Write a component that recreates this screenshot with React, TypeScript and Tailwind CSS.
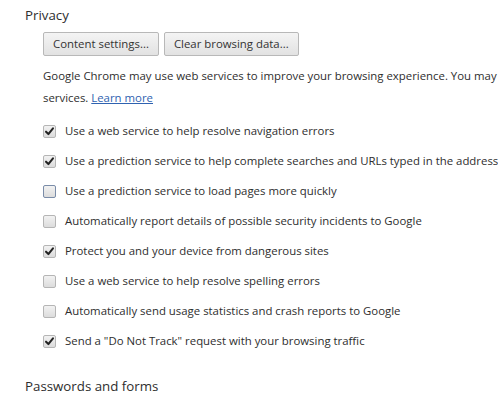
const OPTIONS: { label: string; checked: boolean; focused?: boolean }[] = [
  { label: "Use a web service to help resolve navigation errors", checked: true },
  { label: "Use a prediction service to help complete searches and URLs typed in the address bar", checked: true },
  { label: "Use a prediction service to load pages more quickly", checked: false, focused: true },
  { label: "Automatically report details of possible security incidents to Google", checked: false },
  { label: "Protect you and your device from dangerous sites", checked: true },
  { label: "Use a web service to help resolve spelling errors", checked: false },
  { label: "Automatically send usage statistics and crash reports to Google", checked: false },
  { label: 'Send a "Do Not Track" request with your browsing traffic', checked: true },
];

function Checkbox({ checked, focused }: { checked: boolean; focused?: boolean }) {
  return (
    <span
      className={`relative flex h-[13px] w-[13px] shrink-0 items-center justify-center rounded-[2px] border bg-gradient-to-b from-[#f2f2f2] to-[#dcdcdc] ${
        focused ? "border-[#7a8ca8]" : "border-[#b5b5b5]"
      }`}
    >
      {checked && (
        <svg viewBox="0 0 12 12" className="h-[11px] w-[11px]">
          <path d="M2.2 6.2 L4.8 8.8 L9.8 2.6" fill="none" stroke="#222" strokeWidth={2.2} strokeLinecap="round" strokeLinejoin="round" />
        </svg>
      )}
    </span>
  );
}

export default function App() {
  return (
    <div className="h-[399px] w-[498px] overflow-hidden whitespace-nowrap bg-white font-['Open_Sans',sans-serif] text-[#2e2e2e]">
      <div className="pl-[25px] pt-[4px]">
        <h2 className="text-[13.3px] leading-[22px]">Privacy</h2>
        <div className="pl-[18px]">
          <div className="mt-[6px] flex gap-[5px]">
            <button className="h-[24px] rounded-[2px] border border-[#b8b8b8] bg-gradient-to-b from-[#f4f4f4] to-[#e2e2e2] px-[9px] text-[11.4px] text-[#333]">
              Content settings...
            </button>
            <button className="h-[24px] rounded-[2px] border border-[#b8b8b8] bg-gradient-to-b from-[#f4f4f4] to-[#e2e2e2] px-[9px] text-[11.4px] text-[#333]">
              Clear browsing data...
            </button>
          </div>
          <p className="mt-[9px] text-[11.4px] leading-[22px]">
            Google Chrome may use web services to improve your browsing experience. You may optionally disable these
            <br />
            services. <a className="text-[#2f62b0] underline">Learn more</a>
          </p>
          <div className="mt-[7px] flex flex-col">
            {OPTIONS.map((o) => (
              <label key={o.label} className="flex h-[30px] items-center gap-[9px] text-[11.4px]">
                <Checkbox checked={o.checked} focused={o.focused} />
                <span>{o.label}</span>
              </label>
            ))}
          </div>
        </div>
        <h2 className="mt-[19px] text-[13.3px] leading-[22px]">Passwords and forms</h2>
      </div>
    </div>
  );
}
